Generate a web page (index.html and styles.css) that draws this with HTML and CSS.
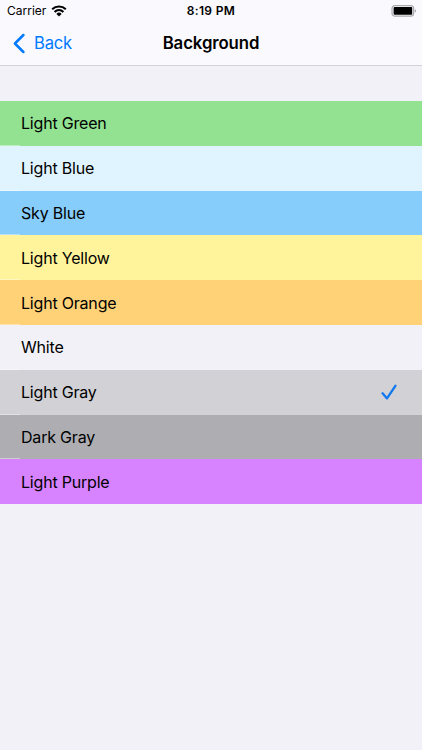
FILE: index.html
```html
<!DOCTYPE html>
<html lang="en">
<head>
  <meta charset="UTF-8" />
  <meta name="viewport" content="width=device-width, initial-scale=1" />
  <title>Background</title>
  <link rel="stylesheet" href="styles.css">
</head>
<body>
  <header>
    <div class="status-bar">
      <div class="carrier">
        <span>Carrier</span>
        <svg width="16" height="12" viewBox="0 0 16 12">
          <path d="M1.2 4.3a9.7 9.7 0 0 1 13.6 0M3.6 6.9a6.2 6.2 0 0 1 8.8 0" fill="none" stroke="#000" stroke-width="2.1" />
          <path d="M5.4 8.9a3.7 3.7 0 0 1 5.2 0L8 11.5z" />
        </svg>
      </div>
      <div class="time">8:19 PM</div>
      <svg class="battery" width="26" height="12" viewBox="0 0 26 12">
        <rect x="1" y="0.6" width="21.6" height="10.6" rx="3" fill="none" stroke="#a9a9ac" stroke-width="1.2" />
        <rect x="2.6" y="2.1" width="18.6" height="7.6" rx="1" />
        <path d="M23.8 4.2q1.2.4 1.2 1.7t-1.2 1.7z" fill="#a0a0a3" />
      </svg>
    </div>
    <nav class="nav-bar">
      <a href="#" class="back">
        <svg width="13" height="21" viewBox="0 0 13 21">
          <path d="M10.4 2L1.9 10.5l8.5 8.5" fill="none" stroke="#007aff" stroke-width="2.5" stroke-linecap="round" stroke-linejoin="round" />
        </svg>
        <span>Back</span>
      </a>
      <h1>Background</h1>
    </nav>
  </header>

  <ul class="colors">
    <li class="light-green"><span>Light Green</span></li>
    <li class="light-blue"><span>Light Blue</span></li>
    <li class="sky-blue"><span>Sky Blue</span></li>
    <li class="light-yellow"><span>Light Yellow</span></li>
    <li class="light-orange"><span>Light Orange</span></li>
    <li class="white"><span>White</span></li>
    <li class="light-gray">
      <span>Light Gray</span>
      <svg width="16" height="16" viewBox="0 0 16 16">
        <path d="M1.6 9.3l4.4 5.1L14.4 1.8" fill="none" stroke="#1278ef" stroke-width="2.3" stroke-linecap="round" stroke-linejoin="round" />
      </svg>
    </li>
    <li class="dark-gray"><span>Dark Gray</span></li>
    <li class="light-purple"><span>Light Purple</span></li>
  </ul>
</body>
</html>
```
FILE: styles.css
```css
* {
  box-sizing: border-box;
}

body {
  margin: 0;
  min-height: 100vh;
  font-family: Inter, "Liberation Sans", sans-serif;
  background: #f2f1f7;
  color: #000;
}

header {
  height: 66px;
  background: #f9f9fe;
  border-bottom: 1px solid #d2d2d7;
}

.status-bar {
  display: grid;
  grid-template-columns: 1fr auto 1fr;
  align-items: center;
  height: 21px;
  padding: 0 5px 0 7px;
  font-size: 12px;
}

.carrier {
  display: flex;
  align-items: center;
  gap: 5px;
}

.time {
  margin-right: 2px;
  font-weight: 600;
  letter-spacing: 0.35px;
}

.battery {
  justify-self: end;
}

/* Title stays centred whatever the width of the back link */
.nav-bar {
  display: grid;
  grid-template-columns: 1fr auto 1fr;
  align-items: center;
  height: 44px;
  padding: 0 13px;
}

.nav-bar h1 {
  margin: 0;
  font-size: 16.8px;
  font-weight: 600;
  letter-spacing: -0.1px;
}

.back {
  display: flex;
  align-items: center;
  gap: 8px;
  color: #007aff;
  font-size: 16.6px;
  letter-spacing: -0.2px;
  text-decoration: none;
}

.colors {
  margin: 35px 0 0;
  padding: 0;
  list-style: none;
}

.colors li {
  display: flex;
  align-items: center;
  justify-content: space-between;
  height: 44.8px;
  padding: 0 25px 0 21px;
  font-size: 16px;
  letter-spacing: -0.2px;
}

/* Separators are inset, so a pale sliver shows at the left edge */
.colors li:not(:last-child) {
  background-image: linear-gradient(rgba(255, 255, 255, 0.4), rgba(255, 255, 255, 0.4));
  background-position: left bottom;
  background-size: 20px 1px;
  background-repeat: no-repeat;
}

.light-green { background-color: #92e292; }
.light-blue { background-color: #e0f4ff; }
.sky-blue { background-color: #87cdfb; }
.light-yellow { background-color: #fff49b; }
.light-orange { background-color: #ffd278; }
.white { background-color: #f2f1f7; }
.light-gray { background-color: #d1d1d6; }
.dark-gray { background-color: #aeaeb2; }
.light-purple { background-color: #d783ff; }
```
